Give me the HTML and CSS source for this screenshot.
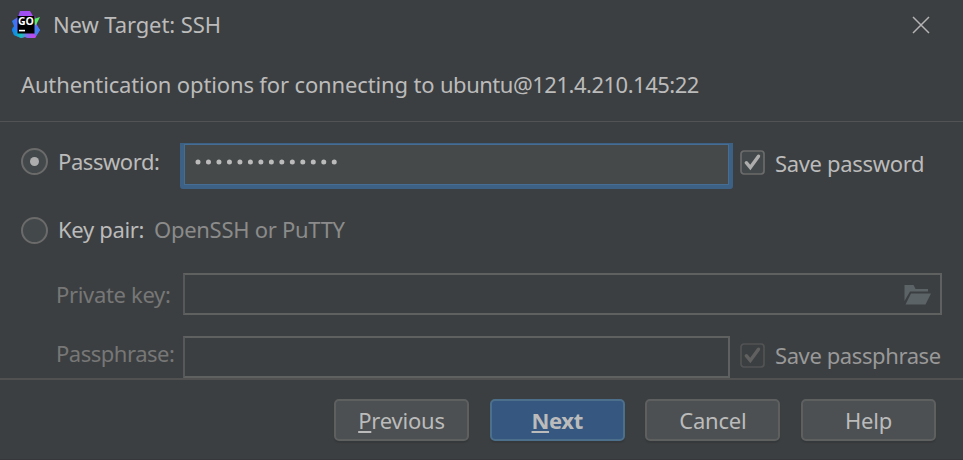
FILE: index.html
```html
<!DOCTYPE html>
<html lang="en">
<head>
<meta charset="utf-8">
<title>New Target: SSH</title>
<link rel="stylesheet" href="styles.css">
</head>
<body>
<div class="dialog">
  <header class="titlebar">
    <svg class="logo" width="28" height="28" viewBox="0 0 28 28">
      <defs>
        <linearGradient id="edge" x1="0" y1="0.5" x2="1" y2="0.3">
          <stop offset="0" stop-color="#1486f5"/><stop offset=".35" stop-color="#9a50f2"/><stop offset=".75" stop-color="#a84cf0"/><stop offset="1" stop-color="#4c7cf2"/>
        </linearGradient>
        <linearGradient id="base" x1="0" y1="0" x2="1" y2="0">
          <stop offset="0" stop-color="#1479f5"/><stop offset=".38" stop-color="#12c3b4"/><stop offset=".65" stop-color="#8a68f0"/><stop offset=".9" stop-color="#c247ee"/>
        </linearGradient>
      </defs>
      <path d="M8 0h10l3 5h2l2 9 3 5-5 8H16l-3-1-4 1-7-3-2-5 2-4-2-5 6-4z" fill="url(#edge)"/>
      <path d="M1 16l5 6h17l1 4-2 1h-6l-3-1-4 1-7-3-2-5z" fill="url(#base)"/>
      <path d="M22 8l6-2-5 10z" fill="#55ef68"/>
      <path d="M22.500 13l5.500 6-4 6-1.500-2z" fill="#3e83f2"/>
      <path d="M5.500 5h17v17.500h-17z" fill="#000"/>
      <text class="logo-text" x="6" y="14" textLength="16" lengthAdjust="spacingAndGlyphs">GO</text>
      <path d="M7 18.800h6v1.600H7z" fill="#fff"/>
    </svg>
    <span class="title">New Target: SSH</span>
    <svg class="close" width="18" height="18" viewBox="0 0 18 18"><path d="M1 1l16 16M17 1L1 17"/></svg>
  </header>
  <div class="heading">Authentication options for connecting to <span class="address">ubuntu@121.4.210.145:22</span></div>
  <main class="form">
    <div class="row row-password">
      <span class="radio checked"></span>
      <span class="label">Password:</span>
      <div class="field focused"><svg width="146" height="8" viewBox="0 0 146 8"><path class="dots" d="M3 4h140"/></svg></div>
      <svg class="check" width="25" height="25" viewBox="0 0 25 25"><rect x="1" y="1" width="23" height="23" rx="3"/><path d="M6.300 12.700l4 4.800L18.500 6.200"/></svg>
      <span class="save">Save password</span>
    </div>
    <div class="row row-pair">
      <span class="radio"></span>
      <span class="label">Key pair:</span>
      <span class="hint">OpenSSH or PuTTY</span>
    </div>
    <div class="row row-key dim">
      <span class="label">Private key:</span>
      <div class="field wide">
        <svg width="28" height="20" viewBox="0 0 28 20"><path d="M.5 0h9l2 4h12.500v2.500H6L.5 16z"/><path d="M7 8.500h20L21.500 19.500H1.500z"/></svg>
      </div>
    </div>
    <div class="row row-phrase dim">
      <span class="label">Passphrase:</span>
      <div class="field"></div>
      <svg class="check" width="25" height="25" viewBox="0 0 25 25"><rect x="1" y="1" width="23" height="23" rx="3"/><path d="M6.300 12.700l4 4.800L18.500 6.200"/></svg>
      <span class="save">Save passphrase</span>
    </div>
  </main>
  <footer class="actions">
    <button class="btn"><u>P</u>revious</button>
    <button class="btn primary"><u>N</u>ext</button>
    <button class="btn">Cancel</button>
    <button class="btn">Help</button>
  </footer>
</div>
</body>
</html>
```
FILE: styles.css
```css
* { box-sizing: border-box; }
body { margin: 0; }
.dialog {
  width: 963px;
  height: 460px;
  overflow: hidden;
  display: flex;
  flex-direction: column;
  background: #3c3f41;
  color: #bbb;
  font: 22px/30px "Noto Sans", sans-serif;
  white-space: nowrap;
  border-bottom: 1px solid #35373a;
}
svg { display: block; flex: none; }
.titlebar { height: 50px; flex: none; display: flex; align-items: center; padding: 0 33px 0 12px; }
.logo-text { font: bold 10.500px "Open Sans", sans-serif; fill: #fff; }
.title { margin: -2px 0 0 13px; letter-spacing: -.1px; }
.close { margin-left: auto; fill: none; stroke: #b4b4b4; stroke-width: 1.500; }
.heading { height: 72px; flex: none; padding: 19px 21px 0; border-bottom: 1px solid #515355; letter-spacing: -.14px; }
.address { letter-spacing: -.49px; }
.form { height: 256px; flex: none; letter-spacing: -.33px; }
.row { display: flex; align-items: flex-start; }
.row-password { height: 67px; padding: 21px 0 0 21px; }
.row-pair { height: 84px; padding: 28px 0 0 21px; }
.row-key { height: 63px; padding-left: 56px; }
.row-phrase { height: 42px; padding-left: 56px; }
.radio {
  flex: none;
  width: 27px;
  height: 27px;
  margin-top: 5px;
  border: 2px solid #6b6b6b;
  border-radius: 50%;
  background: #43494a;
  display: grid;
  place-items: center;
}
.row-pair .radio { margin-top: 0; }
.radio.checked::after { content: ""; width: 9px; height: 9px; border-radius: 50%; background: #adadad; }
.label { flex: none; }
.row-password .label { width: 122px; margin: 3px 0 0 10px; letter-spacing: -.43px; }
.row-pair .label { width: 96px; margin: -3px 0 0 10px; }
.hint { margin-top: -3px; color: #8b8b8b; letter-spacing: -.28px; }
.dim .label { width: 127px; color: #777; margin-top: 6px; }
.row-phrase .label { margin-top: 2px; letter-spacing: -.48px; }
.field { flex: none; width: 547px; height: 42px; border: 2px solid #5f6060; border-left-color: #565859; }
.field.wide { width: 759px; display: flex; justify-content: flex-end; padding: 10px 8px 0; }
.field.wide svg { fill: #5b6366; }
.field.focused {
  width: 553px;
  height: 46px;
  border: solid #3d6185;
  border-width: 1px 4px 4px;
  border-radius: 0 0 3px 3px;
  box-shadow: inset 0 0 0 1px #466d94;
  background: #45494a;
  padding: 14px 0 0 11px;
}
.dots { stroke: #bbb; stroke-width: 5; stroke-linecap: round; stroke-dasharray: 0 10.480; }
.check { margin: 7px 0 0 7px; fill: #43494a; stroke: #6b6b6b; stroke-width: 1.700; }
.check path { fill: none; stroke: #adadad; stroke-width: 3.400; stroke-linecap: round; }
.dim .check { margin-left: 10px; fill: #3c3f41; stroke: #525354; }
.dim .check path { stroke: #606060; }
.save { margin: 5px 0 0 10px; }
.dim .save { margin-top: 4px; color: #999; letter-spacing: -.4px; }
.actions {
  height: 82px;
  flex: none;
  display: flex;
  gap: 20.700px;
  padding: 19px 0 0 334px;
  border-top: 2px solid #515151;
}
.btn {
  width: 135px;
  height: 42px;
  padding: 0 0 1px;
  border: 2px solid #5e6060;
  border-radius: 5px;
  background: #4c5052;
  box-shadow: 0 2px 1px #36393b;
  color: #bbb;
  font: inherit;
  letter-spacing: -.2px;
}
.primary { background: #365880; border-color: #4c708c; font-weight: bold; letter-spacing: -.4px; }
u { text-decoration-thickness: 2px; text-underline-offset: 2px; }
```
